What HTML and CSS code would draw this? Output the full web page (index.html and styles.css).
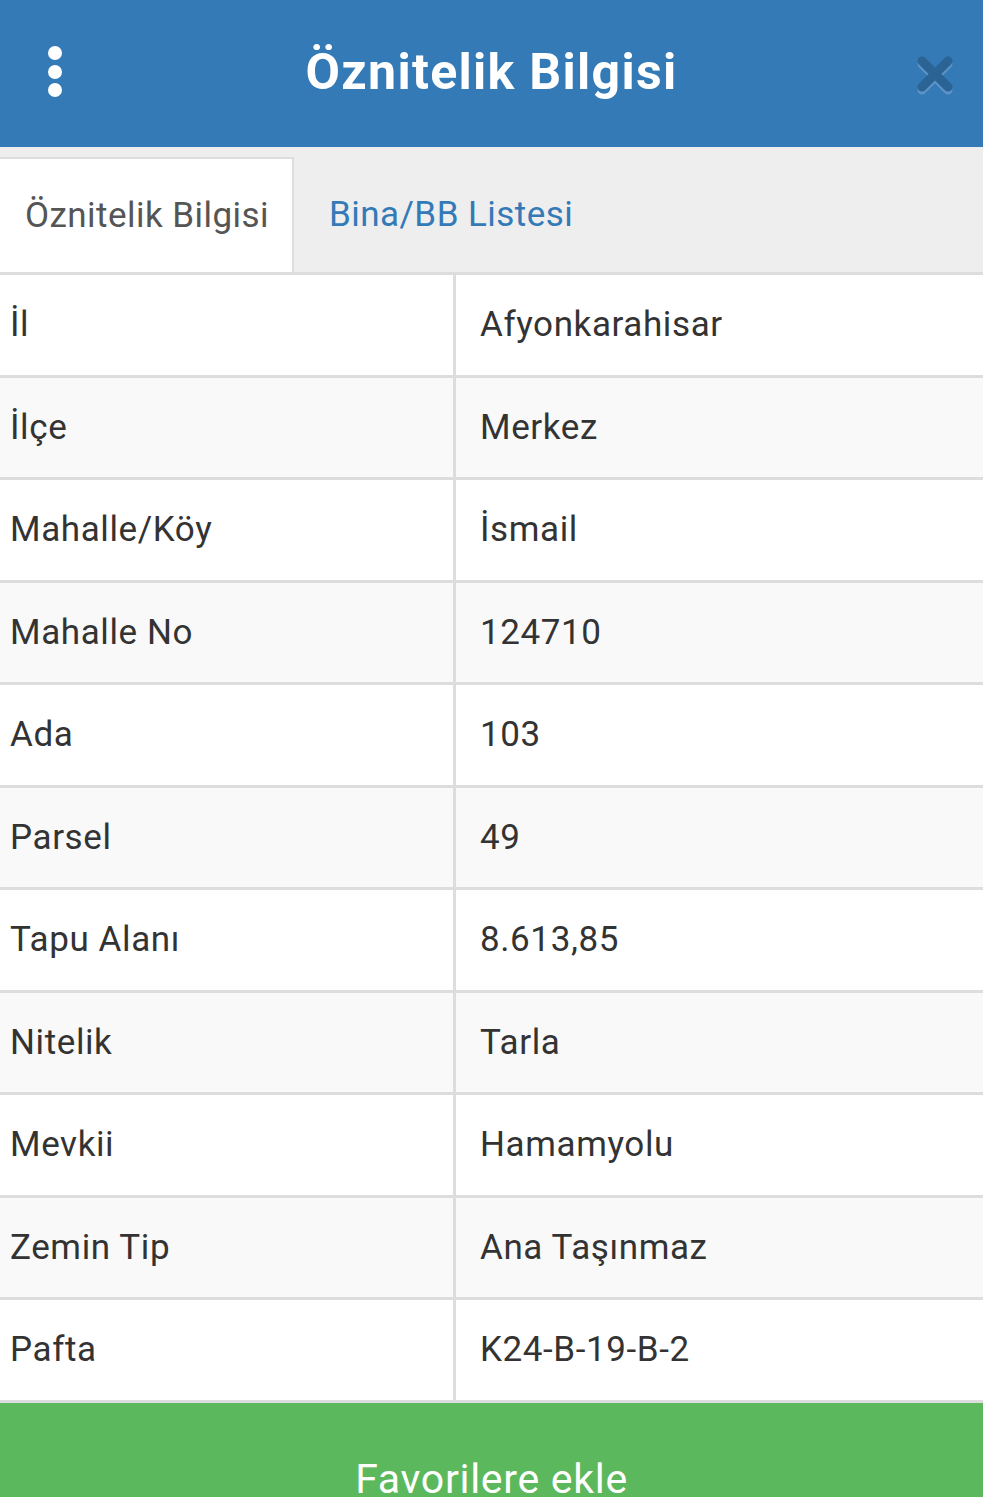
FILE: index.html
```html
<!DOCTYPE html>
<html lang="tr">
  <head>
    <meta charset="UTF-8" />
    <meta name="viewport" content="width=device-width, initial-scale=1.0" />
    <title>Öznitelik Bilgisi</title>
    <link rel="stylesheet" href="styles.css">
  </head>
  <body>
    <header class="topbar">
      <button class="menu-btn" aria-label="Menü">
        <span class="dot"></span>
        <span class="dot"></span>
        <span class="dot"></span>
      </button>
      <h1>Öznitelik Bilgisi</h1>
      <button class="close-btn" aria-label="Kapat">
        <svg width="44" height="44" viewBox="0 0 44 44">
          <g stroke-width="9" stroke-linecap="round">
            <path class="x-shadow" d="M9 12 L35 38 M35 12 L9 38" />
            <path class="x-main" d="M9 9 L35 35 M35 9 L9 35" />
          </g>
        </svg>
      </button>
    </header>

    <nav class="tabs">
      <a class="tab active">Öznitelik Bilgisi</a>
      <a class="tab">Bina/BB Listesi</a>
    </nav>

    <div class="attr-table">
      <div class="attr-row"><div class="attr-key">İl</div><div class="attr-val">Afyonkarahisar</div></div>
      <div class="attr-row"><div class="attr-key">İlçe</div><div class="attr-val">Merkez</div></div>
      <div class="attr-row"><div class="attr-key">Mahalle/Köy</div><div class="attr-val">İsmail</div></div>
      <div class="attr-row"><div class="attr-key">Mahalle No</div><div class="attr-val">124710</div></div>
      <div class="attr-row"><div class="attr-key">Ada</div><div class="attr-val">103</div></div>
      <div class="attr-row"><div class="attr-key">Parsel</div><div class="attr-val">49</div></div>
      <div class="attr-row"><div class="attr-key">Tapu Alanı</div><div class="attr-val">8.613,85</div></div>
      <div class="attr-row"><div class="attr-key">Nitelik</div><div class="attr-val">Tarla</div></div>
      <div class="attr-row"><div class="attr-key">Mevkii</div><div class="attr-val">Hamamyolu</div></div>
      <div class="attr-row"><div class="attr-key">Zemin Tip</div><div class="attr-val">Ana Taşınmaz</div></div>
      <div class="attr-row"><div class="attr-key">Pafta</div><div class="attr-val">K24-B-19-B-2</div></div>
    </div>

    <div class="fav-bar">
      <span class="fav-label">Favorilere ekle</span>
    </div>
  </body>
</html>
```

FILE: styles.css
```css
:root {
  --primary: #337ab7;
  --border: #dddddd;
  --stripe: #f9f9f9;
  --text: #333333;
  --success: #5cb85c;
}

* {
  margin: 0;
  padding: 0;
  box-sizing: border-box;
  font-family: Roboto, "Noto Sans", sans-serif;
}

body {
  background: #fff;
  color: var(--text);
  overflow: hidden;
}

button {
  border: none;
  background: none;
  cursor: pointer;
}

.topbar {
  height: 147px;
  background: var(--primary);
  display: flex;
  align-items: center;
  justify-content: space-between;
  padding: 0 26px 4px 46px;
}

.topbar h1 {
  flex: 1;
  text-align: center;
  color: #fff;
  font-size: 50px;
  font-weight: 700;
  letter-spacing: 1.3px;
  padding-left: 6px;
}

.menu-btn {
  display: flex;
  flex-direction: column;
  gap: 4.5px;
  padding: 0 2px;
}

.dot {
  width: 14px;
  height: 14px;
  border-radius: 50%;
  background: #fff;
}

.close-btn {
  display: flex;
  margin-top: 4px;
}

.x-main {
  stroke: #2a6394;
}

.x-shadow {
  stroke: #5b93c6;
}

.tabs {
  display: flex;
  align-items: flex-end;
  background: #eeeeee;
  height: 128px;
  border-bottom: 3px solid var(--border);
}

.tab {
  display: flex;
  align-items: center;
  height: 115px;
  padding: 0 20px 0 25px;
  font-size: 35px;
  letter-spacing: 0.45px;
  white-space: nowrap;
  color: var(--primary);
}

.tab.active {
  flex: 0 0 294px;
  padding-right: 0;
  margin-right: 10px;
  background: #fff;
  color: #555;
  border-top: 2px solid var(--border);
  border-right: 2px solid var(--border);
}

.attr-row {
  display: grid;
  grid-template-columns: 456px 1fr;
  height: 102.5px;
  border-bottom: 3px solid var(--border);
  font-size: 35px;
  letter-spacing: 0.6px;
}

.attr-row:nth-child(even) {
  background: var(--stripe);
}

.attr-key,
.attr-val {
  display: flex;
  align-items: center;
}

.attr-key {
  padding-left: 10px;
  border-right: 3px solid var(--border);
}

.attr-val {
  padding-left: 24px;
}

.fav-bar {
  background: var(--success);
  text-align: center;
  padding: 56px 0 60px;
}

.fav-label {
  color: #fff;
  font-size: 41px;
  line-height: 1;
  letter-spacing: 0.7px;
}
```
